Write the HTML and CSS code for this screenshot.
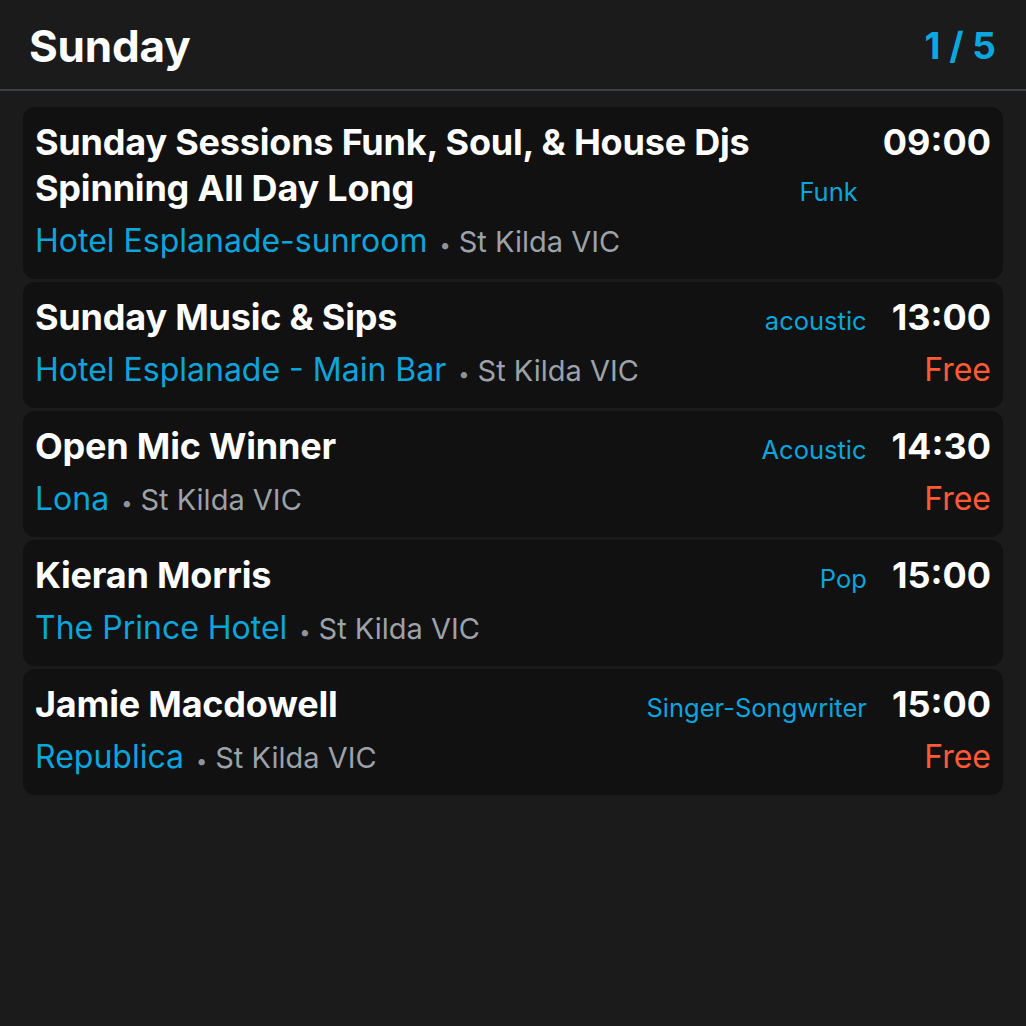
FILE: index.html
```html
<!DOCTYPE html>
<html>
<head>
<meta charset="utf-8">
<link rel="stylesheet" href="styles.css">
</head>
<body>
<div class="app">
  <header class="header">
    <h1 class="day">Sunday</h1>
    <div class="page">1 / 5</div>
  </header>
  <main class="list">
    <div class="card">
      <div class="main">
        <div class="top">
          <div class="title">Sunday Sessions Funk, Soul, &amp; House Djs Spinning All Day Long</div>
          <div class="genre">Funk</div>
        </div>
        <div class="venue"><span class="vname">Hotel Esplanade-sunroom</span><span class="dot">•</span><span class="loc">St Kilda VIC</span></div>
      </div>
      <div class="side">
        <div class="time">09:00</div>
      </div>
    </div>
    <div class="card">
      <div class="main">
        <div class="top">
          <div class="title">Sunday Music &amp; Sips</div>
          <div class="genre">acoustic</div>
        </div>
        <div class="venue"><span class="vname">Hotel Esplanade - Main Bar</span><span class="dot">•</span><span class="loc">St Kilda VIC</span></div>
      </div>
      <div class="side">
        <div class="time">13:00</div>
        <div class="price">Free</div>
      </div>
    </div>
    <div class="card">
      <div class="main">
        <div class="top">
          <div class="title">Open Mic Winner</div>
          <div class="genre">Acoustic</div>
        </div>
        <div class="venue"><span class="vname">Lona</span><span class="dot">•</span><span class="loc">St Kilda VIC</span></div>
      </div>
      <div class="side">
        <div class="time">14:30</div>
        <div class="price">Free</div>
      </div>
    </div>
    <div class="card">
      <div class="main">
        <div class="top">
          <div class="title">Kieran Morris</div>
          <div class="genre">Pop</div>
        </div>
        <div class="venue"><span class="vname">The Prince Hotel</span><span class="dot">•</span><span class="loc">St Kilda VIC</span></div>
      </div>
      <div class="side">
        <div class="time">15:00</div>
      </div>
    </div>
    <div class="card">
      <div class="main">
        <div class="top">
          <div class="title">Jamie Macdowell</div>
          <div class="genre">Singer-Songwriter</div>
        </div>
        <div class="venue"><span class="vname">Republica</span><span class="dot">•</span><span class="loc">St Kilda VIC</span></div>
      </div>
      <div class="side">
        <div class="time">15:00</div>
        <div class="price">Free</div>
      </div>
    </div>
  </main>
</div>
</body>
</html>
```

FILE: styles.css
```css
* { box-sizing: border-box; }
html, body {
  margin: 0;
  padding: 0;
  background: #1b1b1b;
  height: 100%;
}
body {
  font-family: Inter, "Noto Sans", "Liberation Sans", sans-serif;
  color: #ffffff;
}
.app {
  width: 1026px;
  min-height: 1026px;
  background: #1b1b1b;
}
.header {
  display: flex;
  justify-content: space-between;
  align-items: center;
  height: 91px;
  padding: 2px 30px 0 29px;
  border-bottom: 2px solid #3a3f4a;
}
.day {
  margin: 0;
  font-size: 44px;
  font-weight: 700;
  letter-spacing: -0.2px;
  color: #ffffff;
}
.page {
  font-size: 37px;
  font-weight: 700;
  color: #0ba8e0;
}
.list {
  display: flex;
  flex-direction: column;
  gap: 3px;
  padding: 16px 23px;
}
.card {
  display: flex;
  gap: 25px;
  background: #111111;
  border-radius: 12px;
  padding: 12px 12px 12px 12px;
}
.main {
  flex: 1;
  min-width: 0;
  display: flex;
  flex-direction: column;
}
.top {
  display: flex;
  align-items: last baseline;
  gap: 20px;
}
.title {
  flex: 1;
  font-size: 36px;
  font-weight: 700;
  line-height: 46px;
  letter-spacing: -0.2px;
}
.genre {
  font-size: 25.5px;
  line-height: 30px;
  color: #0ba5dc;
  white-space: nowrap;
}
.venue {
  display: flex;
  align-items: baseline;
  height: 52px;
  line-height: 52px;
  margin-top: 4px;
  white-space: nowrap;
  overflow: visible;
}
.vname {
  font-size: 32px;
  color: #0ba5dc;
}
.dot {
  font-size: 20px;
  color: #8e939c;
  margin: 0 8px 0 12px;
}
.loc {
  font-size: 29px;
  color: #9ca1aa;
}
.side {
  display: flex;
  flex-direction: column;
  align-items: flex-end;
}
.time {
  font-size: 36px;
  font-weight: 700;
  height: 46px;
  line-height: 46px;
}
.price {
  font-size: 32px;
  color: #ff5a36;
  height: 52px;
  line-height: 52px;
  margin-top: 4px;
}
```
